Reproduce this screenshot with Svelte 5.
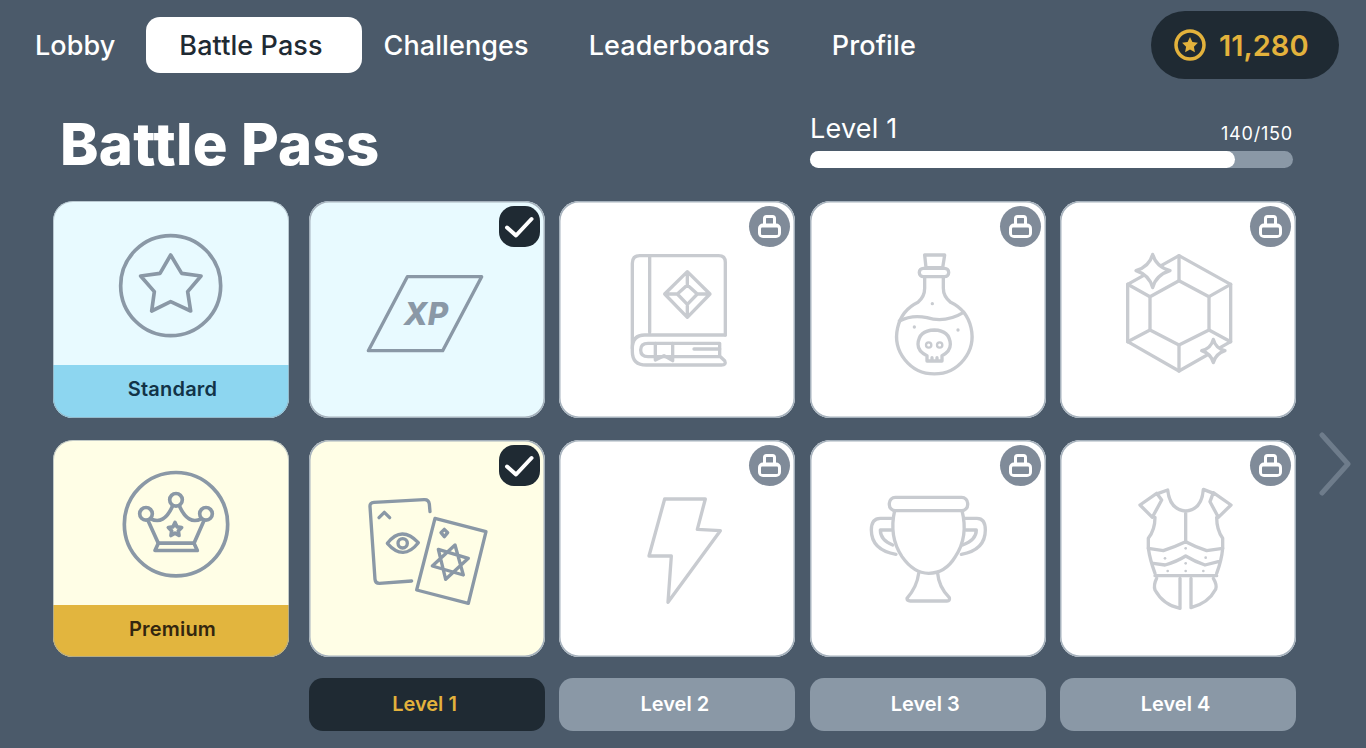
<script>
  const tabs = ['Lobby', 'Battle Pass', 'Challenges', 'Leaderboards', 'Profile'];
  const standard = [
    { icon: 'xp', box: '27 18 708 651', done: true },
    { icon: 'book', box: '13 18 708 651' },
    { icon: 'potion', box: '14 18 708 651' },
    { icon: 'gem', box: '15 18 708 651' }
  ];
  const premium = [
    { icon: 'cards', box: '27 30 708 651', done: true },
    { icon: 'bolt', box: '13 30 708 651' },
    { icon: 'trophy', box: '14 30 708 651' },
    { icon: 'armor', box: '15 30 708 651' }
  ];
  const levels = ['Level 1', 'Level 2', 'Level 3', 'Level 4'];
</script>

{#snippet rewardIcon(name)}
  {#if name === 'xp'}
    <path d="M322 245H545L428 467H205Z" />
    <text class="xp" x="378" y="390" text-anchor="middle">XP</text>
  {:else if name === 'book'}
    <path d="M512 420V202Q512 182 492 182H255Q233 182 233 205V470Q233 510 275 510H500Q516 510 510 497L495 483V445H280Q258 445 258 465Q258 485 280 485H495" />
    <path d="M512 420H270Q233 420 233 460M285 182V412M418 462H495" />
    <path d="M302 445V495L328 482L354 497V445" />
    <path d="M398 230L466 297L398 367L330 297ZM398 270L428 297L398 328L368 297ZM398 230V270M466 297H428M398 367V328M330 297H368" />
  {:else if name === 'potion'}
    <path d="M358 180H418L412 218H362Z" />
    <rect x="342" y="220" width="88" height="25" rx="12" />
    <path d="M358 245V280Q358 305 338 322A113 113 0 1 0 436 322Q414 305 414 280V245" />
    <path d="M282 378Q320 358 365 368Q420 385 475 352" />
    <path d="M365 482Q338 470 338 448Q340 406 387 405Q433 406 435 448Q435 470 410 482V498H365ZM380 488V498M395 488V498" />
    <circle class="thin" cx="370" cy="450" r="8" />
    <circle class="thin" cx="403" cy="450" r="8" />
    <circle class="dot" cx="381" cy="326" r="5" />
    <circle class="dot" cx="327" cy="396" r="5" />
    <circle class="dot" cx="458" cy="405" r="5" />
  {:else if name === 'gem'}
    <path d="M372 182L527 268V440L372 528L218 440V268Z" />
    <path d="M372 257L462 305V405L372 450L285 405V305Z" />
    <path d="M372 182V257M527 268L462 305M527 440L462 405M372 528V450M218 440L285 405M218 268L285 305" />
    <path class="sparkle" d="M293 178Q303 215 345 227Q303 240 293 278Q283 240 243 227Q283 215 293 178Z" />
    <path class="sparkle" d="M475 433Q482 460 510 467Q482 476 475 503Q468 476 440 467Q468 460 475 433Z" />
  {:else if name === 'cards'}
    <path d="M335 453L238 460Q226 460 225 448L210 230Q209 218 222 217L372 209Q386 208 388 222L390 245" />
    <path d="M237 263L253 247L269 263" />
    <path d="M262 340Q305 285 355 338Q310 395 262 340Z" />
    <circle cx="308" cy="340" r="14" />
    <path d="M405 265L558 305L505 520L350 480Z" />
    <path d="M433 298L443 308L433 320L423 308Z" />
    <path d="M465 345L490 435L397 408ZM505 385L437 448L415 358Z" />
  {:else if name === 'bolt'}
    <path d="M330 207H452L428 298L497 302L340 517L350 378H283Z" />
  {:else if name === 'trophy'}
    <rect x="252" y="202" width="235" height="40" rx="18" />
    <path d="M268 242Q250 320 290 380Q325 430 370 430Q420 430 450 380Q490 320 470 242" />
    <path d="M258 265H225Q198 265 198 300Q198 360 272 373M258 300H225Q225 330 262 345" />
    <path d="M478 265H515Q540 265 540 300Q540 360 468 373M482 300H513Q513 330 472 345" />
    <path d="M340 430Q335 470 305 505Q305 513 315 513H425Q435 513 432 503Q400 470 397 430" />
  {:else if name === 'armor'}
    <path d="M255 225L305 190L320 210L292 262ZM475 188L528 225L490 262L465 215Z" />
    <path d="M310 190L338 180Q345 240 392 243Q440 240 445 178L470 188M392 243V335" />
    <path d="M300 262Q300 300 280 325V355Q285 390 300 430M485 262Q485 300 503 325V355Q500 390 485 430" />
    <path d="M280 355L325 362Q360 350 392 335Q420 350 455 362L503 355" />
    <path d="M295 400L330 405Q365 395 392 378Q420 395 450 405L490 395M300 437H485" />
    <path d="M305 445Q295 465 300 480Q325 525 375 535V445M408 445V533Q460 520 482 478Q487 465 475 445" />
    <circle class="dot" cx="330" cy="385" r="4" />
    <circle class="dot" cx="392" cy="355" r="4" />
    <circle class="dot" cx="452" cy="383" r="4" />
    <circle class="dot" cx="392" cy="400" r="4" />
    <circle class="dot" cx="338" cy="423" r="4" />
    <circle class="dot" cx="392" cy="423" r="4" />
    <circle class="dot" cx="445" cy="423" r="4" />
  {/if}
{/snippet}

{#snippet reward(item, tone)}
  <div class="card {item.done ? tone : ''}">
    <svg class="icon" class:muted={!item.done} viewBox={item.box}>
      {@render rewardIcon(item.icon)}
    </svg>
    {#if item.done}
      <span class="badge check">
        <svg viewBox="0 0 41 41"><path d="M8 21.5L17 29.5L32.5 13" /></svg>
      </span>
    {:else}
      <span class="badge lock">
        <svg viewBox="0 0 41 41">
          <path class="shackle" d="M15.5 18V12.5Q15.500 10.500 17.500 10.500H23.500Q25.500 10.500 25.500 12.500V18" />
          <rect class="lock-body" x="9" y="17.500" width="23" height="14.500" rx="5" />
          <rect class="lock-inner" x="12" y="21.500" width="17" height="7.500" rx="1" />
        </svg>
      </span>
    {/if}
  </div>
{/snippet}

<div class="page">
  <header class="topbar">
    <nav class="tabs">
      {#each tabs as tab}
        <button class="tab" class:active={tab === 'Battle Pass'}>{tab}</button>
      {/each}
    </nav>
    <div class="coins">
      <svg viewBox="0 0 32 32">
        <circle class="ring" cx="16" cy="16" r="14" />
        <path class="coin-star" d="M16 8l2.4 5 5.5.8-4 3.9 1 5.5-4.900-2.700-4.900 2.700 1-5.500-4-3.900 5.500-.8z" />
      </svg>
      <span>11,280</span>
    </div>
  </header>

  <section class="head">
    <h1>Battle Pass</h1>
    <div class="progress">
      <div class="progress-text">
        <span class="level">Level 1</span>
        <span class="xp-count">140/150</span>
      </div>
      <div class="track"><div class="fill" style="width: 88%"></div></div>
    </div>
  </section>

  <main class="board">
    <div class="tiers">
      <div class="tier standard">
        <svg class="icon bold" viewBox="39 18 708 492">
          <circle cx="392" cy="272" r="150" />
          <path d="M392 180L425 235L483 243L443 290L452 348L392 320L335 348L343 290L302 243L360 235Z" />
        </svg>
        <div class="tier-name">Standard</div>
      </div>
      <div class="tier premium">
        <svg class="icon bold" viewBox="39 30 708 492">
          <circle cx="408" cy="281" r="155" />
          <circle cx="408" cy="208" r="19" />
          <circle cx="318" cy="250" r="19" />
          <circle cx="498" cy="250" r="19" />
          <path d="M332 265Q372 285 398 226M484 265Q444 285 418 226M324 270L355 338M492 270L462 338" />
          <path d="M355 338H462L472 360H345Z" />
          <path d="M405 276L411 289L425 291L415 301L417 315L405 308L393 315L395 301L385 291L399 289Z" />
        </svg>
        <div class="tier-name">Premium</div>
      </div>
    </div>

    <div class="rewards">
      {#each standard as item}
        {@render reward(item, 'blue')}
      {/each}
      {#each premium as item}
        {@render reward(item, 'yellow')}
      {/each}
      {#each levels as level, i}
        <div class="level-tag" class:current={i === 0}>{level}</div>
      {/each}
    </div>

    <button class="next" aria-label="Next levels">
      <svg viewBox="0 0 32 64"><path d="M3 3L29 32L3 61" /></svg>
    </button>
  </main>
</div>

<style>
  :global(body) {
    background: #4b5a6a;
  }

  .page {
    width: 1366px;
    height: 748px;
    overflow: hidden;
    background: #4b5a6a;
    font-family: Inter, "Liberation Sans", sans-serif;
    color: #fff;
  }

  .topbar {
    display: flex;
    justify-content: space-between;
    align-items: center;
    padding: 11px 27px 0 5px;
  }

  .tabs {
    display: flex;
    align-items: center;
  }

  .tab {
    height: 56px;
    padding: 0 30px;
    border: none;
    border-radius: 14px;
    background: none;
    color: #fff;
    font: inherit;
    font-size: 27px;
    font-weight: 450;
    letter-spacing: 0.1px;
    cursor: pointer;
  }

  .tab.active {
    width: 216px;
    margin: 0 -9px 0 1px;
    padding: 0 7px 0 0;
    background: #fff;
    color: #1f2a33;
  }

  .tab:last-child {
    margin-left: 2px;
  }

  .coins {
    display: flex;
    align-items: center;
    gap: 13px;
    width: 188px;
    height: 68px;
    box-sizing: border-box;
    padding-left: 23px;
    border-radius: 34px;
    background: #1f2a33;
    color: #e3b23c;
    font-size: 29px;
    font-weight: 600;
  }

  .coins svg {
    width: 32px;
    height: 32px;
  }

  .ring {
    fill: none;
    stroke: #e3b23c;
    stroke-width: 3.5;
  }

  .coin-star {
    fill: #e3b23c;
  }

  .head {
    display: flex;
    justify-content: space-between;
    align-items: flex-start;
    height: 122px;
    box-sizing: border-box;
    padding: 25px 73px 0 60px;
  }

  h1 {
    margin: 0;
    font-size: 58px;
    line-height: 80px;
    font-weight: 800;
    letter-spacing: 0.3px;
  }

  .progress {
    width: 483px;
    padding-top: 10px;
  }

  .progress-text {
    display: flex;
    justify-content: space-between;
    align-items: flex-end;
    height: 37px;
  }

  .level {
    position: relative;
    top: -4px;
    font-size: 27px;
    line-height: 37px;
    letter-spacing: 0.2px;
  }

  .xp-count {
    position: relative;
    top: -3px;
    font-size: 18px;
    line-height: 28px;
    letter-spacing: 0.8px;
  }

  .track {
    height: 17px;
    border-radius: 9px;
    background: #8a98a6;
  }

  .fill {
    height: 100%;
    border-radius: 9px;
    background: #fff;
  }

  .board {
    display: flex;
    align-items: flex-start;
    padding-left: 53px;
  }

  .tiers {
    display: flex;
    flex-direction: column;
    gap: 22px;
    width: 236px;
    margin-right: 20px;
  }

  .tier {
    display: flex;
    flex-direction: column;
    height: 217px;
    border-radius: 20px;
    overflow: hidden;
    outline: 1px solid rgba(154, 167, 179, 0.6);
    outline-offset: -1px;
  }

  .tier .icon {
    flex: 1;
    min-height: 0;
  }

  .tier.standard {
    background: #e8faff;
  }

  .tier.standard .tier-name {
    background: #8dd6f0;
    color: #123347;
  }

  .tier.premium {
    background: #fffee6;
  }

  .tier.premium .tier-name {
    height: 52px;
    background: #e2b53e;
    color: #33260f;
  }

  .tier-name {
    height: 53px;
    padding-left: 3px;
    text-align: center;
    font-size: 20px;
    line-height: 49px;
    font-weight: 600;
    letter-spacing: 0.2px;
  }

  .rewards {
    display: grid;
    grid-template-columns: repeat(4, 236px);
    grid-template-rows: 217px 217px 53px;
    column-gap: 14.33px;
    row-gap: 21.5px;
  }

  .card {
    position: relative;
    border-radius: 20px;
    background: #fff;
    box-shadow: inset 0 0 0 1.5px #a5b1bc;
  }

  .card.blue {
    background: #e8faff;
  }

  .card.yellow {
    background: #fffee6;
  }

  .card > .icon {
    display: block;
    width: 100%;
    height: 100%;
  }

  .icon {
    fill: none;
    stroke: #8a98a6;
    stroke-width: 10;
    stroke-linecap: round;
    stroke-linejoin: round;
  }

  .icon.bold {
    stroke-width: 11;
  }

  .icon.muted {
    stroke: #c8cbd0;
  }

  .thin {
    stroke-width: 7;
  }

  .dot {
    fill: #c8cbd0;
    stroke: none;
  }

  .sparkle {
    fill: #fff;
  }

  .xp {
    fill: #8a98a6;
    stroke: none;
    font-size: 94px;
    font-weight: 800;
    font-style: italic;
  }

  .badge {
    position: absolute;
    top: 5px;
    right: 5px;
    width: 41px;
    height: 41px;
  }

  .badge svg {
    display: block;
    width: 41px;
    height: 41px;
  }

  .check {
    border-radius: 15px;
    background: #1f2a33;
  }

  .check path {
    fill: none;
    stroke: #fff;
    stroke-width: 4;
    stroke-linecap: round;
    stroke-linejoin: round;
  }

  .lock {
    border-radius: 50%;
    background: #808b99;
  }

  .lock-body {
    fill: #fff;
  }

  .lock-inner {
    fill: #808b99;
  }

  .shackle {
    fill: none;
    stroke: #fff;
    stroke-width: 3;
  }

  .level-tag {
    padding-right: 5px;
    border-radius: 14px;
    background: #8a98a6;
    text-align: center;
    font-size: 20px;
    line-height: 53px;
    font-weight: 600;
  }

  .level-tag.current {
    background: #1f2a33;
    color: #e3b23c;
  }

  .next {
    width: 32px;
    height: 64px;
    margin: 231px 0 0 23px;
    padding: 0;
    border: none;
    background: none;
  }

  .next svg {
    display: block;
    width: 32px;
    height: 64px;
  }

  .next path {
    fill: none;
    stroke: #6e7c8b;
    stroke-width: 5;
    stroke-linecap: round;
    stroke-linejoin: round;
  }
</style>
